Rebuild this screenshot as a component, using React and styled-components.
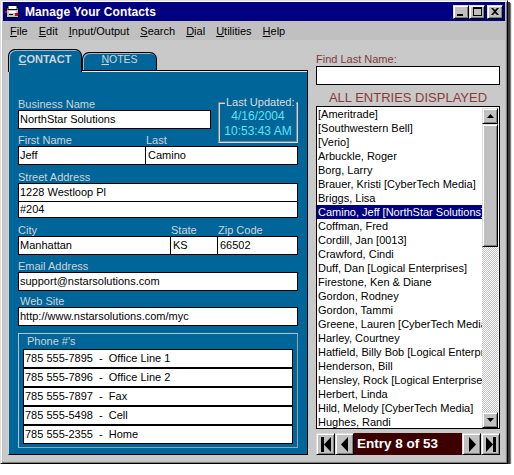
import React from 'react'
import styled, { createGlobalStyle, css } from 'styled-components'

const GlobalStyle = createGlobalStyle`
  body {
    margin: 0;
    background: #fff;
    font-family: "Liberation Sans", Arial, sans-serif;
    font-size: 11px;
  }
`

const menus = ['File', 'Edit', 'Input/Output', 'Search', 'Dial', 'Utilities', 'Help']

const contacts = [
  '[Ameritrade]',
  '[Southwestern Bell]',
  '[Verio]',
  'Arbuckle, Roger',
  'Borg, Larry',
  'Brauer, Kristi [CyberTech Media]',
  'Briggs, Lisa',
  'Camino, Jeff [NorthStar Solutions]',
  'Coffman, Fred',
  'Cordill, Jan [0013]',
  'Crawford, Cindi',
  'Duff, Dan [Logical Enterprises]',
  'Firestone, Ken & Diane',
  'Gordon, Rodney',
  'Gordon, Tammi',
  'Greene, Lauren [CyberTech Media]',
  'Harley, Courtney',
  'Hatfield, Billy Bob [Logical Enterprises]',
  'Henderson, Bill',
  'Hensley, Rock [Logical Enterprises]',
  'Herbert, Linda',
  'Hild, Melody [CyberTech Media]',
  'Hughes, Randi',
]

const SELECTED = 7

const phones = [
  { number: '785 555-7895', kind: 'Office Line 1' },
  { number: '785 555-7896', kind: 'Office Line 2' },
  { number: '785 555-7897', kind: 'Fax' },
  { number: '785 555-5498', kind: 'Cell' },
  { number: '785 555-2355', kind: 'Home' },
]

// little win95 glyphs
const MinGlyph = () => (
  <svg width="8" height="8" viewBox="0 0 8 8"><rect x="0" y="6" width="6" height="2" fill="#000" /></svg>
)
const MaxGlyph = () => (
  <svg width="9" height="9" viewBox="0 0 9 9">
    <rect x="0.5" y="0.5" width="8" height="8" fill="none" stroke="#000" />
    <rect x="0" y="0" width="9" height="2" fill="#000" />
  </svg>
)
const CloseGlyph = () => (
  <svg width="8" height="7" viewBox="0 0 8 7">
    <path d="M0 0h2l2 2 2-2h2L5 3.5 8 7H6L4 5 2 7H0l3-3.5z" fill="#000" />
  </svg>
)

const Arrow = ({ dir, bar }) => (
  <svg width="12" height="15" viewBox="0 0 12 15">
    {dir === 'left' ? (
      <>
        {bar && <rect x="1" y="0" width="3" height="15" fill="#000" />}
        <path d={bar ? 'M11 0v15L4 7.5z' : 'M9 0v15L2 7.5z'} fill="#000" />
      </>
    ) : (
      <>
        {bar && <rect x="8" y="0" width="3" height="15" fill="#000" />}
        <path d={bar ? 'M1 0v15l7-7.5z' : 'M3 0v15l7-7.5z'} fill="#000" />
      </>
    )}
  </svg>
)

const SmallArrow = ({ up }) => (
  <svg width="7" height="4" viewBox="0 0 7 4">
    <path d={up ? 'M3.5 0L7 4H0z' : 'M0 0h7L3.5 4z'} fill="#000" />
  </svg>
)

const AppIcon = () => (
  <svg width="16" height="16" viewBox="0 0 16 16">
    <rect x="1.5" y="3.5" width="12" height="10" fill="#c0c0c0" stroke="#000" />
    <rect x="3" y="1.5" width="9" height="4" fill="#fff" stroke="#000" />
    <rect x="4" y="7" width="7" height="2" fill="#fff" />
    <rect x="4" y="10" width="4" height="1" fill="#000" />
    <rect x="10" y="9" width="3" height="3" fill="#c00040" />
    <rect x="0" y="7" width="2" height="2" fill="#c00040" />
  </svg>
)

export default function App() {
  return (
    <>
      <GlobalStyle />
      <Window>
        <TitleBar>
          <AppIcon />
          <Title>Manage Your Contacts</Title>
          <Controls>
            <CaptionButton><MinGlyph /></CaptionButton>
            <CaptionButton><MaxGlyph /></CaptionButton>
            <CaptionButton $gap><CloseGlyph /></CaptionButton>
          </Controls>
        </TitleBar>

        <MenuBar>
          {menus.map((m) => (
            <MenuItem key={m}><u>{m[0]}</u>{m.slice(1)}</MenuItem>
          ))}
        </MenuBar>

        <Client>
          <LeftColumn>
            <TabRow>
              <Tab $active><u>C</u>ONTACT</Tab>
              <Tab><u>N</u>OTES</Tab>
            </TabRow>

            <Panel>
              <TopGrid>
                <Label $area="blabel">Business Name</Label>
                <Field $area="binput">NorthStar Solutions</Field>
                <Updated>
                  <UpdatedLegend>Last Updated:</UpdatedLegend>
                  <Stamp>4/16/2004</Stamp>
                  <Stamp>10:53:43 AM</Stamp>
                </Updated>
                <Label $area="flabel" $end>First Name</Label>
                <Label $area="llabel" $end>Last</Label>
                <Field $area="finput">Jeff</Field>
                <Field $area="linput" $joinLeft>Camino</Field>
              </TopGrid>

              <Group $top={6}>
                <Label>Street Address</Label>
                <Field>1228 Westloop Pl</Field>
                <Field $joinTop $h={16}>#204</Field>
              </Group>

              <Group $top={6}>
                <CityGrid>
                  <Label>City</Label>
                  <Label>State</Label>
                  <Label>Zip Code</Label>
                  <Field>Manhattan</Field>
                  <Field $joinLeft>KS</Field>
                  <Field $joinLeft>66502</Field>
                </CityGrid>
              </Group>

              <Group $top={5}>
                <Label>Email Address</Label>
                <Field>support@nstarsolutions.com</Field>
              </Group>

              <Group $top={4}>
                <Label $indent>Web Site</Label>
                <Field>http://www.nstarsolutions.com/myc</Field>
              </Group>

              <PhoneBox>
                <PhoneLegend>Phone #'s</PhoneLegend>
                {phones.map((p) => (
                  <PhoneRow key={p.number}>{p.number}&nbsp; - &nbsp;{p.kind}</PhoneRow>
                ))}
              </PhoneBox>
            </Panel>
          </LeftColumn>

          <RightColumn>
            <FindLabel>Find Last Name:</FindLabel>
            <Field $area="auto" $top={1}></Field>
            <Heading>ALL ENTRIES DISPLAYED</Heading>

            <ListBox>
              <Items>
                {contacts.map((c, i) => (
                  <Item key={c} $selected={i === SELECTED}>{c}</Item>
                ))}
              </Items>
              <ScrollBar>
                <ScrollButton><SmallArrow up /></ScrollButton>
                <Thumb />
                <Track />
                <ScrollButton><SmallArrow /></ScrollButton>
              </ScrollBar>
            </ListBox>

            <NavBar>
              <NavButton><Arrow dir="left" bar /></NavButton>
              <NavButton><Arrow dir="left" /></NavButton>
              <EntryLabel>Entry 8 of 53</EntryLabel>
              <NavButton><Arrow dir="right" /></NavButton>
              <NavButton><Arrow dir="right" bar /></NavButton>
            </NavBar>
          </RightColumn>
        </Client>
      </Window>
    </>
  )
}

const raised = css`
  box-sizing: border-box;
  background: #c0c0c0;
  border: 1px solid;
  border-color: #dfdfdf #000 #000 #dfdfdf;
  box-shadow: inset 1px 1px 0 #fff, inset -1px -1px 0 #808080;
`

const Window = styled.div`
  width: 508px;
  height: 464px;
  box-sizing: border-box;
  background: #c0c0c0;
  border: 1px solid;
  border-color: #dfdfdf #000 #000 #dfdfdf;
  box-shadow: inset 1px 1px 0 #fff, inset -1px -1px 0 #808080, 2px 2px 0 #3a3a3a, 3px 3px 1px #777;
  padding: 1px 2px 2px 2px;
  display: flex;
  flex-direction: column;
`

const TitleBar = styled.div`
  height: 19px;
  background: #000080;
  display: flex;
  align-items: center;
  padding: 0 2px;
  gap: 4px;
`

const Title = styled.div`
  flex: 1;
  color: #fff;
  font-weight: 700;
  font-size: 12px;
  letter-spacing: 0.1px;
`

const Controls = styled.div`
  display: flex;
  align-items: center;
`

const CaptionButton = styled.div`
  ${raised}
  width: 16px;
  height: 14px;
  margin-left: ${(p) => (p.$gap ? 2 : 0)}px;
  display: flex;
  align-items: center;
  justify-content: center;
`

const MenuBar = styled.div`
  height: 19px;
  display: flex;
  align-items: center;
  gap: 11px;
  padding-left: 7px;
`

const MenuItem = styled.div`
  color: #000;
  font-size: 11px;
`

const Client = styled.div`
  flex: 1;
  display: flex;
  gap: 8px;
  background: #c9c9c9;
  padding-left: 5px;
`

const LeftColumn = styled.div`
  width: 300px;
  padding-top: 9px;
  display: flex;
  flex-direction: column;
`

const TabRow = styled.div`
  height: 21px;
  display: flex;
  align-items: flex-end;
`

const Tab = styled.div`
  position: relative;
  z-index: ${(p) => (p.$active ? 2 : 1)};
  box-sizing: border-box;
  width: ${(p) => (p.$active ? 74 : 75)}px;
  height: ${(p) => (p.$active ? 23 : 18)}px;
  margin-bottom: ${(p) => (p.$active ? -2 : 0)}px;
  background: #006699;
  border: 1px solid #000;
  border-bottom: none;
  border-radius: 7px 7px 0 0;
  box-shadow: inset 1px 1px 0 #9fb8c8;
  color: #d4d4d4;
  text-align: center;
  font-size: ${(p) => (p.$active ? 11 : 10.5)}px;
  font-weight: ${(p) => (p.$active ? 700 : 400)};
  line-height: 12px;
  padding-top: ${(p) => (p.$active ? 3 : 0)}px;
`

const Panel = styled.div`
  height: 385px;
  box-sizing: border-box;
  background: #006699;
  border: 1px solid #000;
  border-left-color: #d0d0d0;
  box-shadow: inset 0 1px 0 #e8e8e8;
  padding: 27px 9px 0 9px;
`

const TopGrid = styled.div`
  display: grid;
  grid-template-columns: 128px 65px 7px 80px;
  grid-template-rows: 12px 19px 17px 19px;
  grid-template-areas:
    "blabel blabel . updated"
    "binput binput . updated"
    "flabel llabel . updated"
    "finput linput linput linput";
`

const Label = styled.div`
  grid-area: ${(p) => p.$area || 'auto'};
  align-self: ${(p) => (p.$end ? 'end' : 'start')};
  height: 12px;
  line-height: 12px;
  font-size: 11px;
  color: #cfd3d6;
  padding-left: ${(p) => (p.$indent ? 2 : 0)}px;
  white-space: nowrap;
`

const Field = styled.div`
  grid-area: ${(p) => p.$area || 'auto'};
  box-sizing: border-box;
  height: ${(p) => p.$h || 19}px;
  margin-top: ${(p) => p.$top || 0}px;
  background: #fff;
  border: 1px solid #000;
  ${(p) => p.$joinLeft && 'border-left: none;'}
  ${(p) => p.$joinTop && 'border-top: none;'}
  padding-left: ${(p) => (p.$joinLeft ? 2 : 1)}px;
  line-height: ${(p) => (p.$h || 19) - 2}px;
  font-size: 11px;
  color: #000;
  white-space: nowrap;
  overflow: hidden;
`

const Updated = styled.div`
  grid-area: updated;
  position: relative;
  align-self: start;
  box-sizing: border-box;
  height: 41px;
  margin-top: 4px;
  border: 2px groove #d8d8d8;
  padding-top: 5px;
  text-align: center;
`

const UpdatedLegend = styled.span`
  position: absolute;
  top: -8px;
  left: 5px;
  padding: 0 1px;
  background: #006699;
  color: #dcdcdc;
  font-size: 11px;
  line-height: 12px;
  white-space: nowrap;
`

const Stamp = styled.div`
  color: #5fe2f2;
  font-size: 12px;
  line-height: 15px;
`

const Group = styled.div`
  margin-top: ${(p) => p.$top}px;
  display: flex;
  flex-direction: column;
`

const CityGrid = styled.div`
  display: grid;
  grid-template-columns: 153px 47px 80px;
`

const PhoneBox = styled.div`
  margin-top: 7px;
  height: 115px;
  box-sizing: border-box;
  border: 1px solid #b4c2cc;
  border-right-color: #8ea6b6;
  border-bottom-color: #8ea6b6;
  padding: 1px 4px 0 4px;
  display: flex;
  flex-direction: column;
`

const PhoneLegend = styled.div`
  height: 12px;
  line-height: 12px;
  padding-left: 4px;
  margin-bottom: 2px;
  color: #cfd3d6;
  font-size: 11px;
`

const PhoneRow = styled.div`
  box-sizing: border-box;
  height: 19px;
  background: #fff;
  border: 1px solid #000;
  padding-left: 1px;
  line-height: 17px;
  font-size: 11px;
  color: #000;
  white-space: nowrap;
`

const RightColumn = styled.div`
  width: 184px;
  padding-top: 13px;
  display: flex;
  flex-direction: column;
`

const FindLabel = styled.div`
  height: 12px;
  line-height: 12px;
  color: #7f3a3a;
  font-size: 11px;
`

const Heading = styled.div`
  margin-top: 5px;
  height: 15px;
  line-height: 15px;
  text-align: center;
  color: #8b3a3a;
  font-size: 13px;
`

const ListBox = styled.div`
  margin-top: 1px;
  height: 323px;
  box-sizing: border-box;
  background: #fff;
  border: 1px solid #000;
  display: flex;
`

const Items = styled.div`
  flex: 1;
  min-width: 0;
  overflow: hidden;
`

const Item = styled.div`
  height: 14px;
  line-height: 14px;
  padding-left: 1px;
  font-size: 11px;
  white-space: nowrap;
  overflow: hidden;
  color: ${(p) => (p.$selected ? '#fff' : '#000')};
  background: ${(p) => (p.$selected ? '#000080' : 'transparent')};
`

const ScrollBar = styled.div`
  width: 16px;
  padding: 1px 1px 0 0;
  display: flex;
  flex-direction: column;
`

const ScrollButton = styled.div`
  ${raised}
  height: 16px;
  flex-shrink: 0;
  display: flex;
  align-items: center;
  justify-content: center;
`

const Thumb = styled.div`
  ${raised}
  height: 123px;
  flex-shrink: 0;
`

const Track = styled.div`
  flex: 1;
  background: repeating-conic-gradient(#fff 0 25%, #c0c0c0 0 50%) 0 0 / 2px 2px;
`

const NavBar = styled.div`
  margin-top: 4px;
  height: 22px;
  display: flex;
  background: #000;
`

const NavButton = styled.div`
  ${raised}
  width: 19px;
  height: 22px;
  display: flex;
  align-items: center;
  justify-content: center;
`

const EntryLabel = styled.div`
  flex: 1;
  background: #3c0000;
  color: #fff;
  font-weight: 700;
  font-size: 13.5px;
  line-height: 22px;
  padding-left: 3px;
  white-space: nowrap;
`
